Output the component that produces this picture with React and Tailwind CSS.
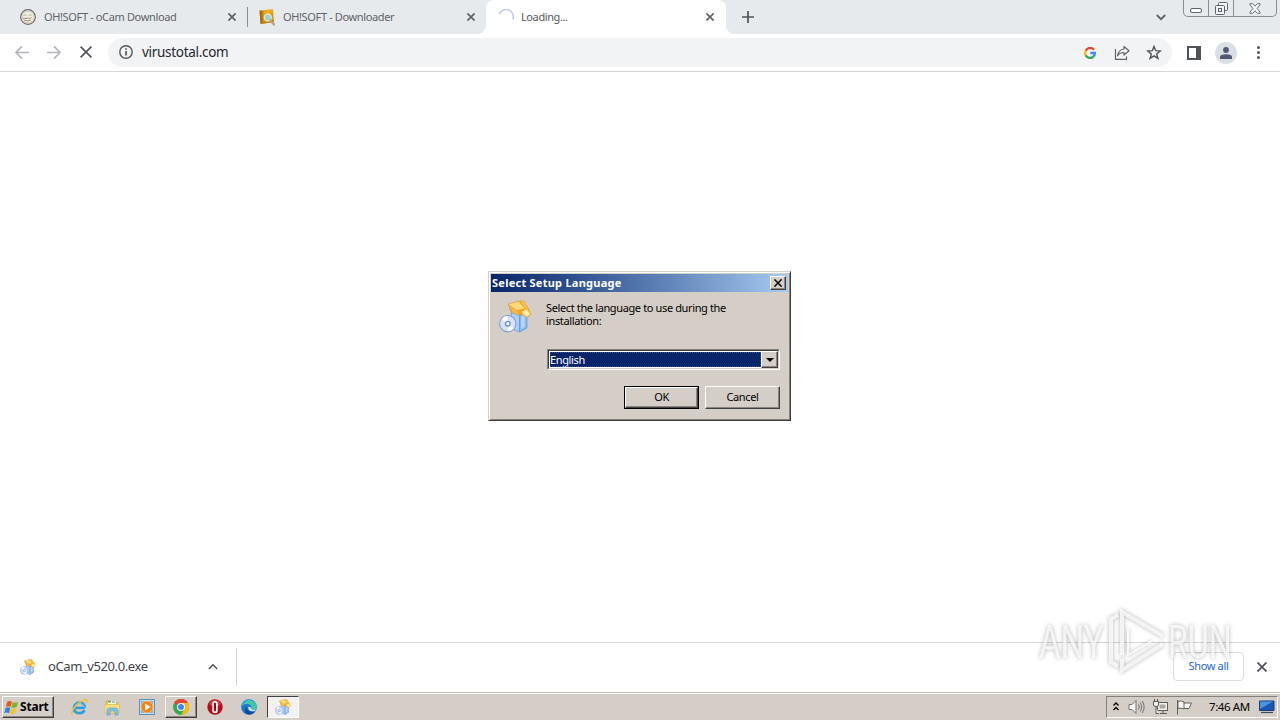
import React from 'react';
import clsx from 'clsx';

const CloseIcon = ({ className, size = 8, stroke = 1.7 }) => (
    <svg width={size} height={size} viewBox="0 0 8 8" className={className} fill="none" stroke="currentColor" strokeWidth={stroke}>
        <path d="M.4 .4 7.6 7.6M7.6 .4 .4 7.6" />
    </svg>
);

// Box with an open lid and a disc in front of it
const SetupIcon = ({ size = 32, className }) => (
    <svg width={size} height={size} viewBox="0 0 32 32" className={className}>
        <path d="M12 12 20 15 20 31 12 28Z" fill="#a9d0fa" stroke="#6b9fe0" strokeWidth=".8" />
        <path d="M20 15 27 11 27 27 20 31Z" fill="#8dbcf4" stroke="#5c92da" strokeWidth=".8" />
        <path d="M21.500 16.500 25 14.500 25 26 21.500 28Z" fill="#b5d5fa" />
        <path d="M9 4 19 1 29 9 27 11 20 14 12 12Z" fill="#f3a924" stroke="#d58f28" strokeWidth=".7" />
        <path d="M9 4 17 10 25 8 19 1.500Z" fill="#ffd97a" />
        <path d="M20 1 24 1 28 8 31 14 27 17 21 13 26 9Z" fill="#ffc84b" stroke="#de9b35" strokeWidth=".7" />
        <path d="M22 11.500 26 9.500 30 13.500 27 16Z" fill="#fff0b5" />
        <path d="M9 4 13 12 20 15 17 10Z" fill="#f7bc45" stroke="#d9a34a" strokeWidth=".5" />
        <circle cx="8.500" cy="23" r="7.900" fill="#d6e2f9" stroke="#8399cf" strokeWidth="1" />
        <path d="M8.500 23 2.500 18.500A7.500 7.500 0 0 1 8 15.600ZM8.500 23 14.500 27.500A7.500 7.500 0 0 1 9 30.400Z" fill="#fff" />
        <circle cx="8.500" cy="23" r="2.200" fill="#fff" stroke="#6e8fd6" strokeWidth="1.300" />
    </svg>
);

const FaceIcon = () => (
    <svg width="16" height="16" viewBox="0 0 16 16" fill="none">
        <circle cx="8" cy="8" r="7.300" fill="#eeece4" stroke="#6d6a63" strokeWidth="1.200" />
        <circle cx="8" cy="8" r="5.900" stroke="#d5d0bf" strokeWidth="1" />
        <path d="M3.500 6.500Q5 5 6.500 6.500M8.500 6.500Q10 5 11.500 6.500" stroke="#b5ab94" strokeWidth=".9" />
        <path d="M2.800 9.300H9.500Q11 9.500 11.500 8.500M4 11Q7.500 13 11 11" stroke="#96876a" strokeWidth=".9" />
    </svg>
);

const FolderSearchIcon = () => (
    <svg width="16" height="17" viewBox="0 0 16 17">
        <path d="M.5 1.500 14 .5 15 13 1.500 15Z" fill="#d99a12" />
        <path d="M.5 1.500 3.500 2 4 13 1.500 15Z" fill="#a5720f" />
        <path d="M5 1 14 .5 14.300 4 5 4.500Z" fill="#e8ab22" />
        <path d="M4 13 15 11V13L1.500 15Z" fill="#b87e10" />
        <circle cx="8.800" cy="8.500" r="3.500" fill="#9ed2cd" stroke="#e3e8d0" strokeWidth="1.300" />
        <path d="M11.500 11.300 15 15.500" stroke="#b9a187" strokeWidth="2.200" strokeLinecap="round" />
    </svg>
);

const GoogleIcon = () => (
    <svg width="12" height="12" viewBox="0 0 24 24" fill="none" strokeWidth="4.600">
        <path d="M20 5.500A10 10 0 0 0 3.300 7.500" stroke="#ea4335" />
        <path d="M3.300 7.500A10 10 0 0 0 3.300 16.500" stroke="#fbbc05" />
        <path d="M3.300 16.500A10 10 0 0 0 18.500 19.500" stroke="#34a853" />
        <path d="M18.500 19.500A10 10 0 0 0 21.700 12H12.500" stroke="#4285f4" />
    </svg>
);

const ChromeIcon = () => (
    <svg width="16" height="16" viewBox="0 0 16 16">
        <circle cx="8" cy="8" r="8" fill="#34a853" />
        <path d="M8 8 1.070 4A8 8 0 0 1 14.930 4Z" fill="#ea4335" />
        <path d="M8 4H14.930A8 8 0 0 1 8 16L11.500 10Z" fill="#fbbc05" />
        <circle cx="8" cy="8" r="4" fill="#fff" />
        <circle cx="8" cy="8" r="3" fill="#4285f4" />
    </svg>
);

const ExplorerEIcon = () => (
    <svg width="18" height="18" viewBox="0 0 18 18" fill="none">
        <path d="M14.800 9.800H4.800M14.700 9.800C15 2.800 4 2.800 4 9.900 4 16.300 12.600 16.500 14.400 12.200" stroke="#2f9be0" strokeWidth="2.700" />
        <path d="M14.200 9.200C13.800 4.200 5.200 4.600 4.600 8.800" stroke="#83d4fa" strokeWidth="1" />
        <path d="M2.500 16.500C-1 14.500 8 4 14.500 1.800 17.500 .8 17.500 3 16.300 5.300" stroke="#eec02f" strokeWidth="1.500" />
    </svg>
);

const FileManagerIcon = () => (
    <svg width="17" height="17" viewBox="0 0 17 17">
        <path d="M2 2H6L7 3.500H14V14H2Z" fill="#e8c65d" stroke="#c9a33d" strokeWidth=".6" />
        <path d="M4 2H12V5H4Z" fill="#fbf4cf" />
        <path d="M4 2H7V3.500H4Z" fill="#4cb168" />
        <path d="M8 2.500H11V3.500H8Z" fill="#4d98d5" />
        <path d="M1 5.500H15.500V14H1Z" fill="#f7df82" stroke="#d9b854" strokeWidth=".6" />
        <path d="M3 16V11.500Q3 9 5.500 9H11.500Q14 9 14 11.500V16H11V12H6V16Z" fill="#83c2e8" stroke="#5497bf" strokeWidth=".6" />
    </svg>
);

const MediaPlayerIcon = () => (
    <svg width="16" height="16" viewBox="0 0 16 16">
        <rect x=".5" y=".5" width="15" height="15" fill="#c3e0f5" stroke="#5792c1" />
        <rect x="2" y="2" width="12" height="12" fill="#78b3df" />
        <circle cx="8" cy="8" r="6" fill="#f48212" stroke="#fbc67f" strokeWidth=".8" />
        <path d="M6.200 4.500 11.500 8 6.200 11.500Z" fill="#fff" />
    </svg>
);

const OperaIcon = () => (
    <svg width="16" height="16" viewBox="0 0 16 16">
        <circle cx="8" cy="8" r="7.700" fill="#b90d18" />
        <ellipse cx="8" cy="4.500" rx="5.500" ry="3.300" fill="#d0404b" />
        <rect x="5.300" y="2" width="5.400" height="12" rx="2.600" fill="#fff" />
        <rect x="7" y="3.500" width="2" height="9" rx="1" fill="#9a0a14" />
    </svg>
);

const EdgeIcon = () => (
    <svg width="16" height="16" viewBox="0 0 16 16">
        <circle cx="8" cy="8" r="7.800" fill="#1679cf" />
        <path d="M.4 7.500A7.700 7.700 0 0 1 15.700 8C15.700 10 14 11 12 11 9.500 11 10.500 9.500 10.500 8.300 10.500 4.500 3.500 3.500 .4 7.500Z" fill="#43c7ad" />
        <path d="M.4 7.500A7.700 7.700 0 0 1 8.500 .3C5 3 2 4.500 .4 7.500Z" fill="#2aa8dc" />
        <path d="M6 8C5 11 8 14 14 12.300 11 17.500 3 16 4 10.500 4.300 9 5 8.300 6 8Z" fill="#10489b" />
        <path d="M8 7.500C6 9 8 12.500 12 12.300 14 12.200 15 11 15.300 10.500 13 11.500 10 11 10.500 9Z" fill="#e6e2de" />
    </svg>
);

const WindowsFlag = () => (
    <svg width="17" height="17" viewBox="0 0 18 17">
        <path d="M4.500 2.500Q7 .8 9.500 2.300L8 8Q5.500 6.500 3 8Z" fill="#e8561f" />
        <path d="M10.300 2.700Q13 4 16 2.300L14.500 8Q12 9.500 9 8.400Z" fill="#78b72a" />
        <path d="M2.700 8.900Q5.200 7.400 7.800 9L6.300 14.500Q4 13 1.200 14.500Z" fill="#2f83d6" />
        <path d="M8.700 9.300Q11.500 10.500 14.200 9L12.800 14.600Q10 16 7.200 14.900Z" fill="#f6c325" />
    </svg>
);

const tabs = [
    { title: 'OH!SOFT - oCam Download', icon: <FaceIcon />, className: 'w-[248px] pl-5 pr-3' },
    { title: 'OH!SOFT - Downloader', icon: <FolderSearchIcon />, className: 'w-[238px] pl-[11px] pr-[11px]' },
];

function TabStrip() {
    return (
        <div className="flex h-[34px] bg-[#e7eaed] text-[#5f6368]">
            {tabs.map((tab, i) => (
                <div key={tab.title} className={clsx('flex items-center', tab.className)}>
                    {tab.icon}
                    <span className="ml-2 grow text-[11px] tracking-[-0.36px] whitespace-nowrap">{tab.title}</span>
                    <CloseIcon />
                    {i === 0 && <span className="-mr-3 ml-[11px] h-5 w-px bg-[#8b8e92]" />}
                </div>
            ))}
            <div className="relative flex w-60 items-center rounded-t-lg bg-white pr-3 pl-3">
                <span className="absolute bottom-0 -left-2 size-2 bg-[radial-gradient(circle_at_0_0,#e7eaed_7.500px,white_8px)]" />
                <span className="absolute -right-2 bottom-0 size-2 bg-[radial-gradient(circle_at_100%_0,#e7eaed_7.500px,white_8px)]" />
                <svg width="16" height="16" viewBox="0 0 16 16" fill="none">
                    <path d="M1.300 5A7 7 0 0 1 14.800 10.500" stroke="#c5d0e6" strokeWidth="1.800" />
                </svg>
                <span className="ml-[7px] grow text-[11px] tracking-[-0.4px] text-[#55585c]">Loading...</span>
                <CloseIcon />
            </div>
            <svg width="12" height="12" viewBox="0 0 12 12" className="mt-[11px] ml-4" stroke="#505357" strokeWidth="1.700">
                <path d="M6 0V12M0 6H12" />
            </svg>
            <div className="grow" />
            <svg width="10" height="7" viewBox="0 0 10 7" className="mt-[14px]" fill="none" stroke="#5f6368" strokeWidth="1.800">
                <path d="M.8 1 5 5.200 9.200 1" />
            </svg>
            <div className="mr-[3px] ml-[17px] flex h-[17px] w-[94px] rounded-b-[5px] border border-t-0 border-[#8a8d93] text-[#5d6470]">
                <div className="flex w-[25px] items-end justify-center border-r border-[#8a8d93] pb-[3px]">
                    <span className="h-[5px] w-3 rounded-[2px] border border-[#5d6470] bg-white" />
                </div>
                <div className="flex w-[25px] items-center justify-center border-r border-[#8a8d93]">
                    <svg width="13" height="14" viewBox="0 0 13 14" fill="#f3f4f6" stroke="currentColor">
                        <rect x="3.500" y="1.500" width="9" height="8" rx="1" />
                        <rect x=".5" y="4.500" width="9" height="9" rx="1" />
                        <rect x="3.500" y="7.500" width="3" height="3" />
                    </svg>
                </div>
                <div className="flex grow items-center justify-center pr-px">
                    <svg width="12" height="11" viewBox="0 0 13 12" fill="#f6f7f8" stroke="currentColor">
                        <path d="M1 .8H4L6.500 3.500 9 .8H12V2L8.700 6 12 10V11.200H9L6.500 8.500 4 11.200H1V10L4.300 6 1 2Z" />
                    </svg>
                </div>
            </div>
        </div>
    );
}

function Toolbar() {
    return (
        <div className="flex h-[38px] items-center border-b border-[#d5d6d8] bg-white pr-[19px] pl-[15px]">
            <svg width="14" height="14" viewBox="0 0 14 14" fill="none" stroke="#b5b7ba" strokeWidth="1.700">
                <path d="M14 6.500H1.500M7 .3 1 6.500 7 12.700" />
            </svg>
            <svg width="14" height="14" viewBox="0 0 14 14" className="ml-[18px]" fill="none" stroke="#b5b7ba" strokeWidth="1.700">
                <path d="M0 6.500H12.500M7 .3 13 6.500 7 12.700" />
            </svg>
            <CloseIcon size={12} stroke={1.1} className="mb-px ml-[19px] text-[#505357]" />
            <div className="ml-[16px] flex h-[29px] w-[1064px] items-center rounded-full bg-[#f1f3f4] pr-[10px] pl-[11px]">
                <svg width="14" height="14" viewBox="0 0 14 14" className="mb-px" fill="none" stroke="#55585c" strokeWidth="1.400">
                    <circle cx="7" cy="7" r="6.200" />
                    <path d="M7 6V10.500M7 3.200V4.800" strokeWidth="1.700" />
                </svg>
                <span className="ml-[9px] grow text-[13.500px] tracking-[-0.3px] text-[#27292c]">virustotal.com</span>
                <GoogleIcon />
                <svg width="16" height="16" viewBox="0 0 16 16" className="ml-[18px]" fill="none" stroke="#5f6368" strokeWidth="1.200">
                    <path d="M1.500 4V14.300H12.500V11.500" />
                    <path d="M10 1.500 15 5.800 10 10V7.500C7 7.500 5 8.300 3.600 10.800 4.300 6.500 6.500 4.400 10 4Z" strokeLinejoin="round" />
                </svg>
                <svg width="16" height="16" viewBox="0 0 16 16" className="ml-4" fill="none" stroke="#505357" strokeWidth="1.400">
                    <path d="M8 1.500 9.700 5.700 14.200 6 10.700 8.900 11.900 13.400 8 10.900 4.100 13.400 5.300 8.900 1.800 6 6.300 5.700Z" />
                </svg>
            </div>
            <div className="ml-[15px] h-[14px] w-[14px] border-2 border-r-[5px] border-[#505357]" />
            <div className="ml-[14px] flex size-[22px] items-center justify-center rounded-full bg-[#dadee5]">
                <svg width="12" height="12" viewBox="0 0 12 12" fill="#505b73">
                    <circle cx="6" cy="3" r="2.900" />
                    <path d="M0 12V10Q0 7.300 6 7.300 12 7.300 12 10V12Z" />
                </svg>
            </div>
            <svg width="4" height="13" viewBox="0 0 4 13" className="ml-[19px]" fill="#505357">
                <circle cx="2.500" cy="1.600" r="1.500" />
                <circle cx="2.500" cy="6.500" r="1.500" />
                <circle cx="2.500" cy="11.400" r="1.500" />
            </svg>
        </div>
    );
}

const raised = 'border border-t-white border-l-white border-r-[#404040] border-b-[#404040] shadow-[inset_-1px_-1px_0_#8b8680]';

function SetupDialog() {
    return (
        <div className="absolute top-[271px] left-[488px] h-[150px] w-[303px] border border-t-[#d5cec7] border-r-[#404040] border-b-[#404040] border-l-[#d5cec7] bg-[#d5cec7] p-[2px] text-[11px] tracking-[-0.37px] text-black shadow-[inset_1px_1px_0_white,inset_-1px_-1px_0_#85807a]">
            <div className="flex h-[18px] items-center bg-linear-to-r from-[#0a246a] to-[#a6caf0] pr-[2px] pl-[1px]">
                <span className="grow text-[11px] font-bold tracking-[0.25px] text-white">Select Setup Language</span>
                <div className={clsx('flex h-[14px] w-4 items-center justify-center bg-[#d5cec7]', raised)}>
                    <CloseIcon stroke={1.5} />
                </div>
            </div>
            <div className="flex px-2 pt-[8px]">
                <SetupIcon size={33} />
                <p className="mt-px ml-[14px] leading-[13px]">
                    Select the language to use during the
                    <br />
                    installation:
                </p>
            </div>
            <div className="mt-4 ml-14 flex h-[21px] w-[233px] border border-t-[#85807a] border-r-white border-b-white border-l-[#85807a] bg-white">
                <div className="flex grow border border-t-[#404040] border-r-[#d5cec7] border-b-[#d5cec7] border-l-[#404040]">
                    <div className="m-px mr-0 flex grow items-center bg-[#0a246a] pt-px text-white outline outline-1 -outline-offset-1 outline-dotted outline-[#3c4f85]">
                        English
                    </div>
                    <div className={clsx('flex w-[17px] items-center justify-center bg-[#d5cec7]', raised)}>
                        <svg width="8" height="4" viewBox="0 0 8 4">
                            <path d="M0 0H8L4 4Z" />
                        </svg>
                    </div>
                </div>
            </div>
            <div className="mt-4 mr-2 flex justify-end gap-[6px]">
                <div className="w-[75px] border border-black">
                    <div className={clsx('flex h-[21px] items-center justify-center', raised)}>OK</div>
                </div>
                <div className={clsx('flex h-[23px] w-[75px] items-center justify-center', raised)}>Cancel</div>
            </div>
        </div>
    );
}

function DownloadShelf() {
    return (
        <div className="flex h-[50px] items-center border-t border-[#d5d6d8] bg-white pr-[13px] pb-[2px] pl-5">
            <SetupIcon size={16} />
            <span className="ml-3 w-[160px] text-[13px] tracking-[-0.4px] text-[#404347]">oCam_v520.0.exe</span>
            <svg width="10" height="7" viewBox="0 0 10 7" fill="none" stroke="#505357" strokeWidth="1.600">
                <path d="M.8 6 5 1.800 9.200 6" />
            </svg>
            <div className="ml-[18px] h-[38px] w-px bg-[#d5d6d8]" />
            <div className="grow" />
            <div className="mr-[13px] flex h-[29px] w-[71px] items-center justify-center rounded-[4px] border border-[#dadce0] pb-px text-[11px] tracking-[-0.35px] text-[#1b66c9]">
                Show all
            </div>
            <CloseIcon size={10} stroke={1.4} className="text-[#505357]" />
        </div>
    );
}

function Taskbar() {
    return (
        <div className="flex h-7 border-t border-[#c5c1bc] bg-[#d5cec7] pr-[2px] pl-[2px] text-black shadow-[inset_0_1px_0_white]">
            <div className={clsx('mt-[3px] flex h-[22px] w-[52px] items-center', raised)}>
                <WindowsFlag />
                <span className="text-[12px] font-bold tracking-[-0.2px]">Start</span>
            </div>
            <div className="mt-[3px] ml-4 flex h-[22px] items-center">
                <ExplorerEIcon />
                <div className="ml-4"><FileManagerIcon /></div>
                <div className="ml-[18px]"><MediaPlayerIcon /></div>
                <div className={clsx('ml-[10px] flex h-[22px] w-8 items-center justify-center', raised)}>
                    <ChromeIcon />
                </div>
                <div className="ml-[10px]"><OperaIcon /></div>
                <div className="ml-[18px]"><EdgeIcon /></div>
                <div className="ml-[10px] flex h-[22px] w-8 items-center justify-center border border-t-[#404040] border-r-white border-b-white border-l-[#404040] bg-[#f3f1ef]">
                    <SetupIcon size={16} />
                </div>
            </div>
            <div className="grow" />
            <div className="mt-[3px] flex h-[22px] w-[172px] items-center border border-t-[#85807a] border-r-white border-b-white border-l-[#85807a] pl-[6px]">
                <svg width="6" height="9" viewBox="0 0 6 9" className="mb-[2px]" fill="none" stroke="black" strokeWidth="1.300">
                    <path d="M.5 3.500 3 1 5.500 3.500M.5 8 3 5.500 5.500 8" />
                </svg>
                <svg width="17" height="16" viewBox="0 0 17 16" className="ml-[9px]" fill="#f4f2f0" stroke="#76726d">
                    <path d="M1 5.500H4L8 1.500V14.500L4 10.500H1Z" />
                    <path d="M10.500 5.500Q12 8 10.500 10.500M12.500 3.500Q15 8 12.500 12.500M14.300 2Q18 8 14.300 14" fill="none" />
                </svg>
                <svg width="17" height="16" viewBox="0 0 17 16" className="ml-[7px]" fill="#f4f2f0" stroke="#5f5c58">
                    <rect x="5.500" y="3.500" width="10" height="8" />
                    <rect x="7.500" y="5.500" width="6" height="4" fill="#aaa6a1" stroke="none" />
                    <path d="M8 14.500H15M11 12V14" />
                    <path d="M1.500 2.500H6.500V6Q6.500 7.500 4 7.500 1.500 7.500 1.500 6ZM2.500 0V2M5.500 0V2M4 8V14.500H7" />
                </svg>
                <svg width="17" height="16" viewBox="0 0 17 16" className="ml-[7px]" fill="#f8f6f4" stroke="#66625e">
                    <path d="M1.500 1V15.500M2 2.500Q5 1 8 3V10Q5 8.500 2 9.500ZM8 4H15.500L13 9.500H8" />
                </svg>
                <span className="ml-4 w-[50px] text-[11.500px] tracking-[-0.4px] whitespace-nowrap">7:46 AM</span>
                <svg width="16" height="14" viewBox="0 0 16 14">
                    <path d="M.5 1H15V10.500H.5Z" fill="#1c55ad" stroke="#143d7a" />
                    <path d="M1 1.500H14L1 9Z" fill="#4b95df" />
                    <path d="M2 12.500H14" stroke="#384a60" strokeWidth="1.200" />
                </svg>
            </div>
        </div>
    );
}

// Semi-transparent brand mark over the bottom right corner
function Watermark() {
    return (
        <svg width="204" height="72" viewBox="0 0 204 72" className="pointer-events-none absolute top-[605px] left-[1034px] overflow-visible drop-shadow-[0_0_2px_rgba(0,0,0,0.4)]">
            <g fill="#fff" fillOpacity=".75" fontFamily="Roboto, sans-serif" fontSize="46">
                <text transform="translate(5 53) scale(.72 1)">ANY</text>
                <text transform="translate(134 53) scale(.7 1)">RUN</text>
            </g>
            <g fill="none" stroke="#fff" strokeOpacity=".75" strokeWidth="4">
                <path d="M84 10 77 14V57L84 61" />
                <path d="M88 50V7L129 31" />
                <path d="M88 54V65L129 39" />
                <path d="M94 24V50L118 36" strokeWidth="2" />
            </g>
        </svg>
    );
}

export default function App() {
    return (
        <div className="relative flex h-[720px] w-[1280px] flex-col overflow-hidden bg-white font-['Noto_Sans',sans-serif] leading-normal">
            <TabStrip />
            <Toolbar />
            <main className="grow" />
            <DownloadShelf />
            <Taskbar />
            <SetupDialog />
            <Watermark />
        </div>
    );
}
